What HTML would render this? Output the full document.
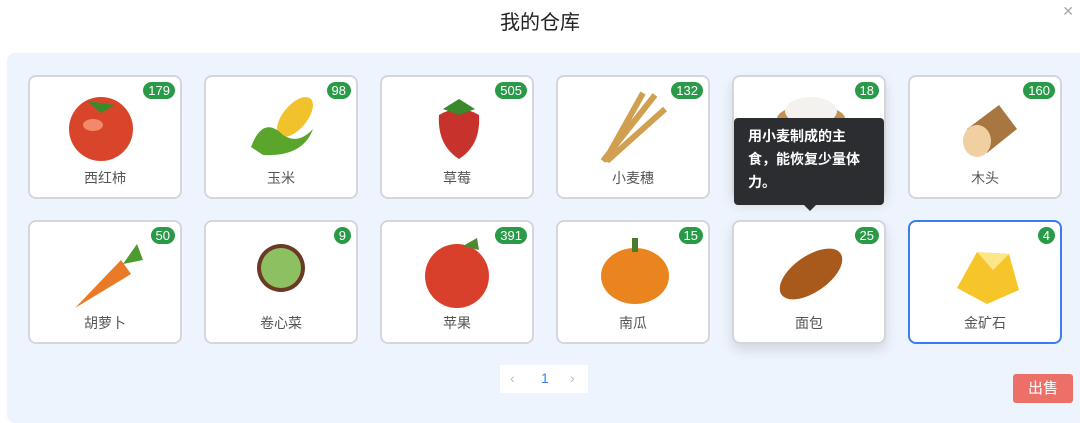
<!DOCTYPE html>
<html><head><meta charset="utf-8"><style>
*{margin:0;padding:0;box-sizing:border-box}
body{width:1080px;height:412px;background:#fff;font-family:"Liberation Sans","Noto Sans CJK SC",sans-serif;position:relative;overflow:hidden}
.title{position:absolute;top:6px;left:0;width:1080px;text-align:center;font-size:20px;color:#222}
.close{position:absolute;right:6px;top:3px;font-size:14px;color:#aaa}
.panel{position:absolute;left:7px;top:53px;width:1080px;height:370px;background:#eef4fd;border-radius:8px}
.card{position:absolute;width:154px;height:124px;background:#fff;border:2px solid #d4d6dc;border-radius:8px}
.card.sel{border-color:#3b7cf0}
.card.sh{box-shadow:0 6px 12px rgba(0,0,0,.12)}
.badge{position:absolute;right:5px;top:5px;background:#2b9a48;color:#fff;font-size:13px;line-height:17px;padding:0 5px;border-radius:9px;min-width:17px;text-align:center}
.name{position:absolute;bottom:9px;left:0;width:100%;text-align:center;font-size:14px;color:#555}
.card svg{position:absolute;left:37px;top:8px}
.tip{position:absolute;left:734px;top:118px;width:150px;height:87px;background:#2b2d31;border-radius:4px;color:#fff;font-size:14px;font-weight:bold;line-height:23px;padding:7px 14px}
.tip:after{content:"";position:absolute;left:70px;bottom:-6px;border:6px solid transparent;border-bottom:0;border-top-color:#2b2d31}
.pg{position:absolute;left:500px;top:365px;width:88px;height:28px;background:#fff;border-radius:2px;font-size:14px}
.sell{position:absolute;left:1013px;top:374px;width:60px;height:29px;background:#ec7067;border-radius:3px;color:#fff;font-size:15px;text-align:center;line-height:29px}
</style></head><body>
<div class="title">我的仓库</div>
<div class="close">✕</div>
<div class="panel"></div>

<div class="card" style="left:28px;top:75px"><svg width="80" height="80"><circle cx="34" cy="44" r="32" fill="#d9452a"/><ellipse cx="26" cy="40" rx="10" ry="6" fill="#f08a6a"/><path d="M20 16 L48 20 L34 28 Z" fill="#3a8a2c"/></svg><span class="badge">179</span><div class="name">西红柿</div></div>
<div class="card" style="left:204px;top:75px"><svg width="80" height="80"><ellipse cx="52" cy="32" rx="12" ry="24" transform="rotate(40 52 32)" fill="#f2c22c"/><path d="M8 62 Q20 30 40 50 Q55 60 70 44 Q60 72 20 70 Z" fill="#5aa52c"/></svg><span class="badge">98</span><div class="name">玉米</div></div>
<div class="card" style="left:380px;top:75px"><svg width="80" height="80"><path d="M20 30 Q40 18 60 30 Q62 60 40 74 Q18 60 20 30Z" fill="#c8322c"/><path d="M24 24 L40 14 L56 24 L40 30Z" fill="#3a8a2c"/></svg><span class="badge">505</span><div class="name">草莓</div></div>
<div class="card" style="left:556px;top:75px"><svg width="80" height="80"><path d="M8 76 L60 10 M12 76 L70 24 M10 76 L48 8" stroke="#d0a050" stroke-width="6"/></svg><span class="badge">132</span><div class="name">小麦穗</div></div>
<div class="card sh" style="left:732px;top:75px"><svg width="80" height="80"><ellipse cx="40" cy="34" rx="34" ry="14" fill="#c79052"/><ellipse cx="40" cy="26" rx="26" ry="14" fill="#f4f2ee"/></svg><span class="badge">18</span></div>
<div class="card" style="left:908px;top:75px"><svg width="80" height="80"><path d="M20 44 L52 20 L70 44 L40 68Z" fill="#a87640"/><ellipse cx="30" cy="56" rx="14" ry="16" fill="#f0d0a0"/></svg><span class="badge">160</span><div class="name">木头</div></div>

<div class="card" style="left:28px;top:220px"><svg width="80" height="80"><path d="M8 78 L54 30 L64 44 Z" fill="#ea7a26"/><path d="M56 34 L70 14 L76 30Z" fill="#4c9a30"/></svg><span class="badge">50</span><div class="name">胡萝卜</div></div>
<div class="card" style="left:204px;top:220px"><svg width="80" height="80"><circle cx="38" cy="38" r="24" fill="#6a3a24"/><circle cx="38" cy="38" r="20" fill="#8cc060"/></svg><span class="badge">9</span><div class="name">卷心菜</div></div>
<div class="card" style="left:380px;top:220px"><svg width="80" height="80"><circle cx="38" cy="46" r="32" fill="#d8402c"/><path d="M44 16 L58 8 L60 20Z" fill="#4c8a2c"/></svg><span class="badge">391</span><div class="name">苹果</div></div>
<div class="card" style="left:556px;top:220px"><svg width="80" height="80"><ellipse cx="40" cy="46" rx="34" ry="28" fill="#e9841e"/><rect x="37" y="8" width="6" height="14" fill="#4a7a2a"/></svg><span class="badge">15</span><div class="name">南瓜</div></div>
<div class="card sh" style="left:732px;top:220px"><svg width="80" height="80"><ellipse cx="40" cy="44" rx="36" ry="18" transform="rotate(-35 40 44)" fill="#a85a1c"/></svg><span class="badge">25</span><div class="name">面包</div></div>
<div class="card sel" style="left:908px;top:220px"><svg width="80" height="80"><path d="M10 58 L30 22 L62 24 L72 60 L40 74Z" fill="#f6c52a"/><path d="M30 22 L46 40 L62 24" fill="#fde58a"/></svg><span class="badge">4</span><div class="name">金矿石</div></div>

<div class="tip">用小麦制成的主<br>食，能恢复少量体<br>力。</div>
<div class="pg"><span style="position:absolute;left:10px;top:5px;color:#bbb">‹</span><span style="position:absolute;left:41px;top:5px;color:#3b82f0">1</span><span style="position:absolute;left:70px;top:5px;color:#bbb">›</span></div>
<div class="sell">出售</div>
</body></html>
